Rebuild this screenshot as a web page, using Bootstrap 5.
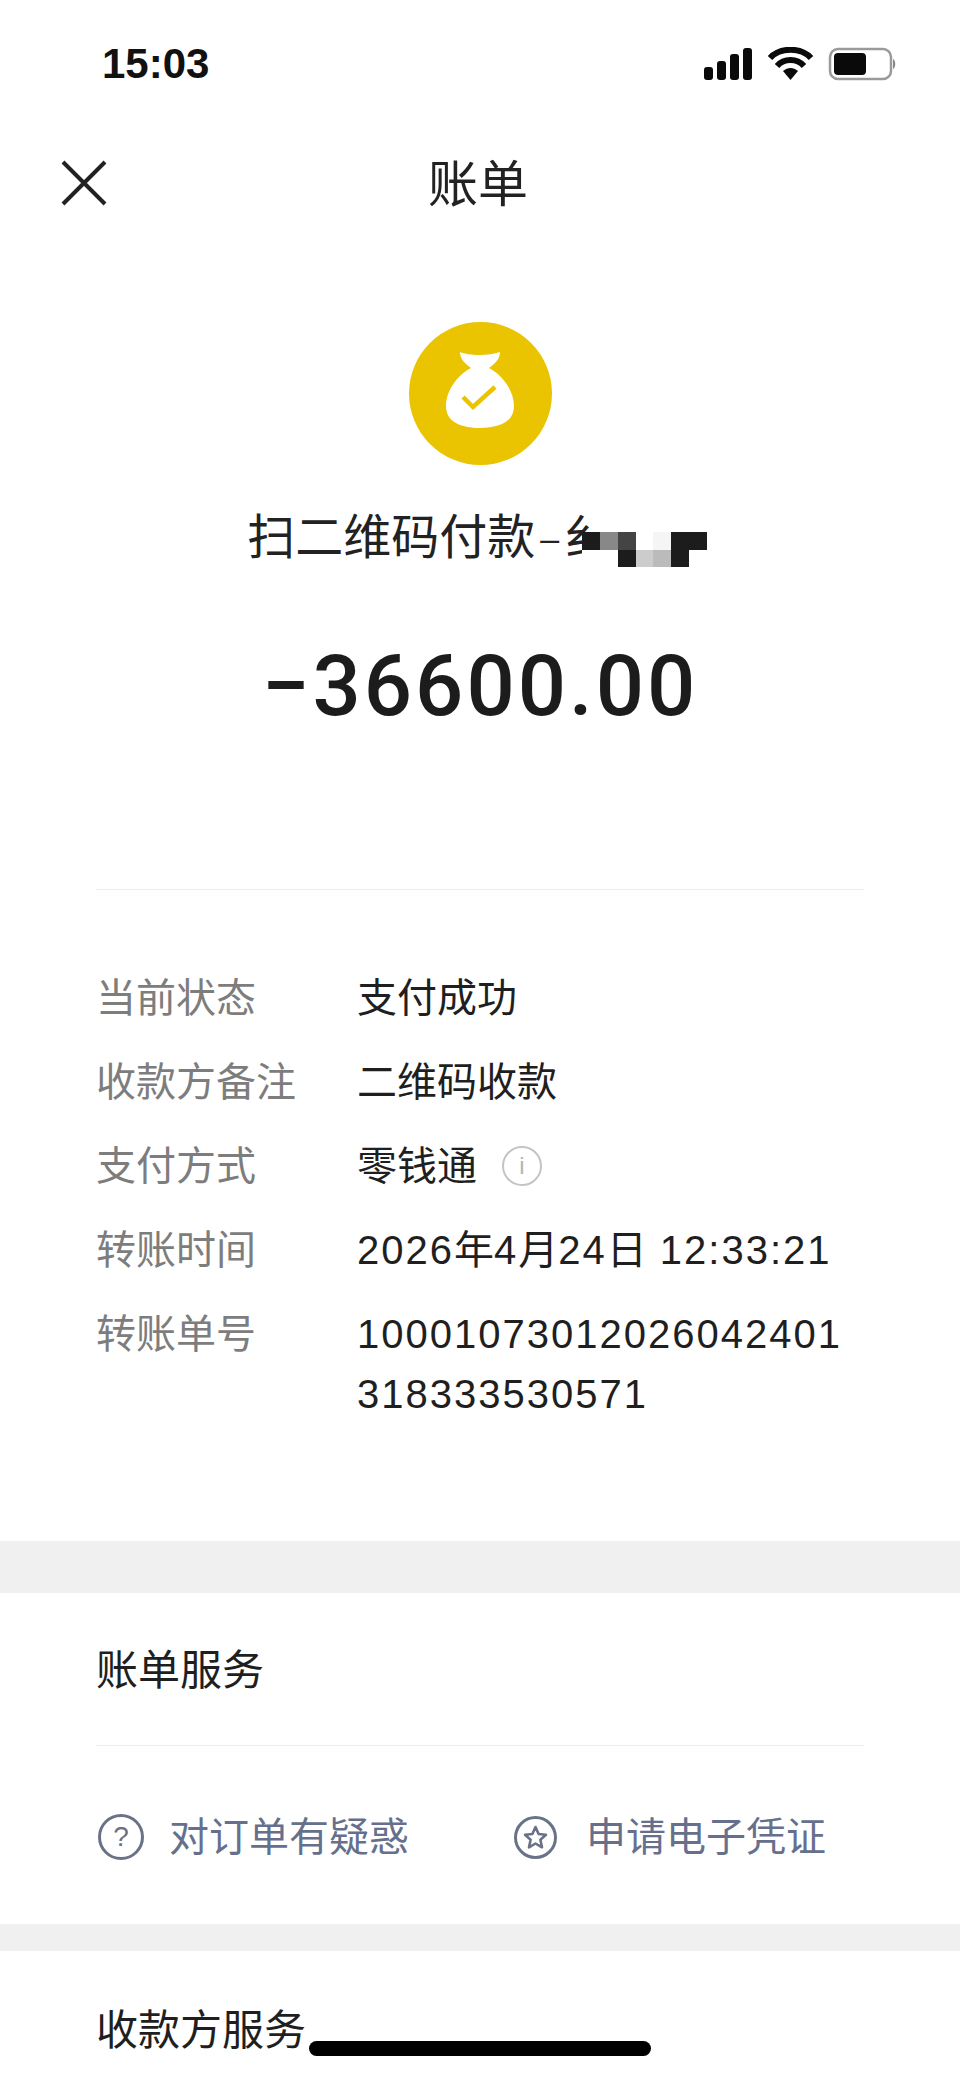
<!DOCTYPE html>
<html lang="zh-CN">
<head>
  <meta charset="UTF-8" />
  <title>账单</title>
  <link href="https://cdn.jsdelivr.net/npm/bootstrap@5.3.3/dist/css/bootstrap.min.css" rel="stylesheet" />
  <style>
    body {
      font-family: "Liberation Sans", "Noto Sans CJK SC", sans-serif;
      font-size: 40px;
      line-height: 60px;
      color: #1f1f1f;
      background: #fff;
      height: 2079px;
      overflow: hidden;
    }
    .status-row { height: 128px; padding: 0 63px 0 102px; }
    .status-time { font-size: 42px; font-weight: 700; line-height: 40px; color: #111; }
    .nav-row { height: 110px; display: grid; grid-template-columns: 1fr auto 1fr; padding-left: 61px; padding-right: 65px; }
    .nav-title { font-size: 50px; color: #222; padding-top: 4px; }
    .hero-box { padding-top: 84px; }
    .hero-name { margin-top: 43px; font-size: 48px; color: #222; }
    .hero-dash { margin: 0 5px; font-size: 34px; }
    .mosaic-grid {
      display: grid;
      grid-template-columns: repeat(7, 17.8px);
      grid-auto-rows: 17.7px;
      margin-left: -30px;
      margin-right: 6px;
      margin-top: 24px;
    }
    .m-k { background: #1c1c1c; }
    .m-g { background: #888; }
    .m-d { background: #444; }
    .m-w { background: #fff; }
    .m-f { background: #f5f5f5; }
    .m-l { background: #ccc; }
    .m-b { background: #bbb; }
    .amount-text {
      margin-top: 68px;
      font-family: Roboto, "Liberation Sans", sans-serif;
      font-size: 85px;
      line-height: 100px;
      letter-spacing: 3px;
      font-weight: 500;
      color: #1c1c1c;
    }
    .rule-line { height: 1px; background: #ececec; margin-left: 96px; margin-right: 96px; }
    .rule-top { margin-top: 153px; }
    .detail-list { padding: 78px 0 117px 96px; }
    .detail-row { display: flex; margin-bottom: 24px; }
    .detail-row:last-child { margin-bottom: 0; }
    .detail-label { width: 261px; color: #7d7d7d; flex-shrink: 0; }
    .detail-value { letter-spacing: 2px; color: #1f1f1f; }
    .cjk-text { letter-spacing: 0; }
    .bill-no { width: 490px; word-break: break-all; }
    .info-dot {
      width: 40px;
      height: 40px;
      margin-left: 25px;
      border: 2px solid #c4c4c4;
      border-radius: 50%;
      color: #b5b5b5;
      font-size: 24px;
      line-height: 36px;
      text-align: center;
      font-weight: 300;
    }
    .gap-band { background: #f0f0f0; }
    .band-one { height: 52px; }
    .band-two { height: 27px; }
    .service-head { padding: 48px 96px 44px; font-size: 42px; color: #1f1f1f; }
    .service-links { padding: 61px 96px 57px; color: #66708c; }
    .service-circle {
      border: 3px solid #6a7288;
      border-radius: 50%;
      display: flex;
      align-items: center;
      justify-content: center;
      flex-shrink: 0;
    }
    .circle-q { width: 46px; height: 46px; margin-left: 2px; font-size: 28px; line-height: 1; }
    .circle-s { width: 43px; height: 43px; }
    .link-one { width: 418px; gap: 25px; }
    .link-two { gap: 29px; }
    .last-head { padding: 50px 96px 0; font-size: 42px; }
    .home-bar {
      position: absolute;
      left: 309px;
      top: 2041px;
      width: 342px;
      height: 15px;
      background: #000;
      border-radius: 8px;
    }
  </style>
</head>
<body class="position-relative">
  <div class="status-row d-flex justify-content-between align-items-center">
    <span class="status-time">15:03</span>
    <svg width="193" height="34" viewBox="0 0 193 34" fill="#0a0a0a">
      <rect x="0" y="20" width="9" height="13" rx="3" />
      <rect x="13" y="14" width="9" height="19" rx="3" />
      <rect x="26" y="7" width="9" height="26" rx="3" />
      <rect x="39" y="1" width="9" height="32" rx="3" />
      <path d="M66 11 C76 0 97 0 107 11" fill="none" stroke="#0a0a0a" stroke-width="6" />
      <path d="M73 19 C80 11 93 11 100 19" fill="none" stroke="#0a0a0a" stroke-width="6" />
      <path d="M79 24 C84 20 89 20 94 24 L86.5 33 Z" />
      <rect x="126" y="2" width="61" height="30" rx="8" fill="#fff" stroke="#9a9a9a" stroke-width="2.5" />
      <rect x="130" y="6" width="32" height="22" rx="4" />
      <path d="M189 12 C192 13 192 21 189 22 Z" fill="#8a8a8a" />
    </svg>
  </div>

  <div class="nav-row align-items-center">
    <svg width="46" height="46" viewBox="0 0 46 46">
      <path d="M2 2 L44 44 M44 2 L2 44" stroke="#222" stroke-width="4" fill="none" />
    </svg>
    <div class="nav-title">账单</div>
    <div></div>
  </div>

  <div class="hero-box d-flex flex-column align-items-center">
    <svg width="143" height="143" viewBox="0 0 143 143">
      <circle cx="71.5" cy="71.5" r="71.5" fill="#eac400" />
      <path d="M51 30 C60 34 80 34 91 30 C91 38 85 42 80 46 C95 54 105 70 105 84 C105 100 90 106 71 106 C52 106 37 100 37 84 C37 70 47 54 62 46 C57 42 51 38 51 30 Z" fill="#fff" />
      <path d="M54 75 L64 85 L86 65" fill="none" stroke="#eac400" stroke-width="4.5" />
    </svg>
    <div class="hero-name d-flex">
      <span>扫二维码付款</span><span class="hero-dash">–</span><span>纟</span>
      <div class="mosaic-grid">
        <i class="m-k"></i><i class="m-g"></i><i class="m-d"></i><i class="m-w"></i><i class="m-f"></i><i class="m-k"></i><i class="m-k"></i>
        <i class="m-w"></i><i class="m-w"></i><i class="m-k"></i><i class="m-l"></i><i class="m-b"></i><i class="m-k"></i><i class="m-w"></i>
      </div>
    </div>
    <div class="amount-text">−36600.00</div>
  </div>

  <div class="rule-line rule-top"></div>

  <div class="detail-list">
    <div class="detail-row"><div class="detail-label">当前状态</div><div class="detail-value cjk-text">支付成功</div></div>
    <div class="detail-row"><div class="detail-label">收款方备注</div><div class="detail-value cjk-text">二维码收款</div></div>
    <div class="detail-row">
      <div class="detail-label">支付方式</div>
      <div class="detail-value cjk-text">零钱通</div>
      <div class="info-dot align-self-center">i</div>
    </div>
    <div class="detail-row"><div class="detail-label">转账时间</div><div class="detail-value">2026<span class="cjk-text">年</span>4<span class="cjk-text">月</span>24<span class="cjk-text">日</span> 12:33:21</div></div>
    <div class="detail-row"><div class="detail-label">转账单号</div><div class="detail-value bill-no">10001073012026042401318333530571</div></div>
  </div>

  <div class="gap-band band-one"></div>

  <div class="service-head">账单服务</div>
  <div class="rule-line"></div>
  <div class="service-links d-flex">
    <div class="link-one d-flex align-items-center">
      <span class="service-circle circle-q">?</span>
      <span>对订单有疑惑</span>
    </div>
    <div class="link-two d-flex align-items-center">
      <span class="service-circle circle-s">
        <svg width="25" height="25" viewBox="0 0 25 25">
          <path d="M12.5 2 L15.6 9 L23 9.8 L17.4 14.8 L19 22.3 L12.5 18.5 L6 22.3 L7.6 14.8 L2 9.8 L9.4 9 Z" fill="none" stroke="#6a7288" stroke-width="2.6" stroke-linejoin="round" />
        </svg>
      </span>
      <span>申请电子凭证</span>
    </div>
  </div>

  <div class="gap-band band-two"></div>

  <div class="last-head">收款方服务</div>
  <div class="home-bar"></div>

  <script src="https://cdn.jsdelivr.net/npm/bootstrap@5.3.3/dist/js/bootstrap.bundle.min.js"></script>
</body>
</html>
